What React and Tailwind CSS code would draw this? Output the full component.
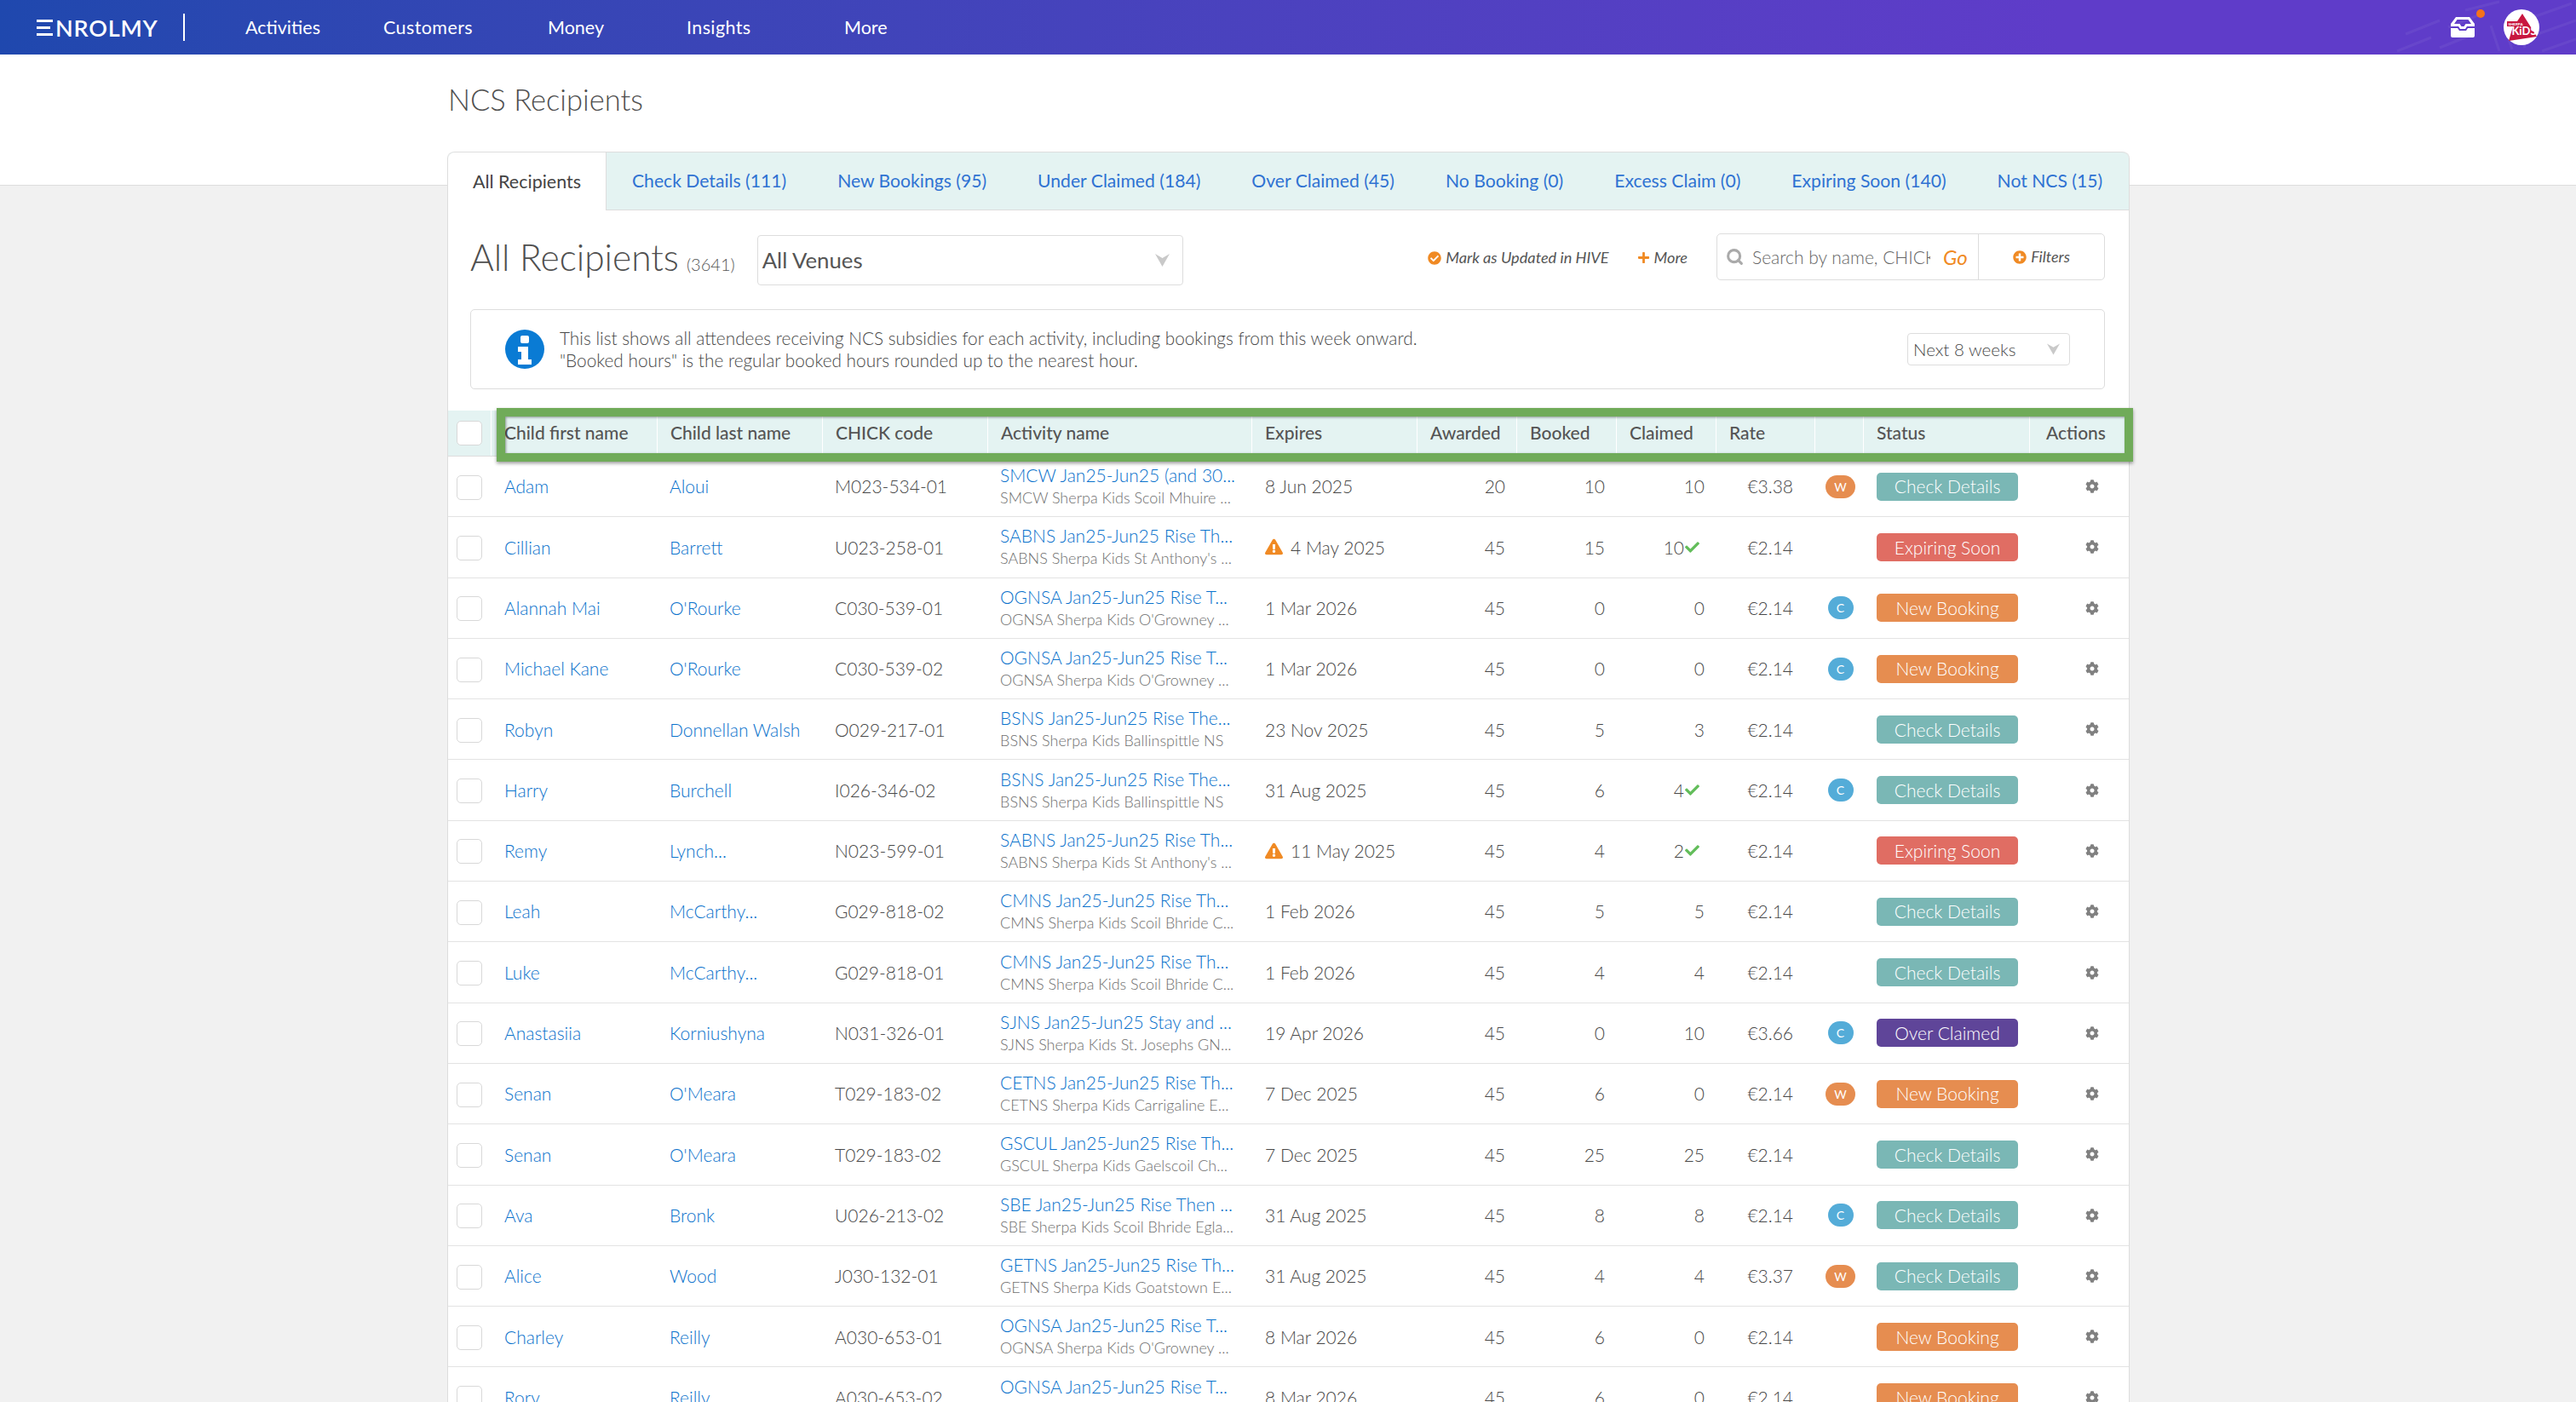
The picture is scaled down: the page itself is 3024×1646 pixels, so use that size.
import React from "react";
import { Search } from "lucide-react";
import { FaCog, FaCheck, FaExclamationTriangle, FaCheckCircle, FaPlus, FaPlusCircle } from "react-icons/fa";

const cols =
  "grid grid-cols-[51px_195px_194px_194px_310px_194px_117px_117px_117px_116px_57px_195px_116px]";

const tabs = [
  "Check Details (111)",
  "New Bookings (95)",
  "Under Claimed (184)",
  "Over Claimed (45)",
  "No Booking (0)",
  "Excess Claim (0)",
  "Expiring Soon (140)",
  "Not NCS (15)",
];

const headers = ["Child first name", "Child last name", "CHICK code", "Activity name", "Expires", "Awarded", "Booked", "Claimed", "Rate", "", "Status"];

const statusColors = {
  "Check Details": "bg-[#7ab7b5]",
  "Expiring Soon": "bg-[#e06d63]",
  "New Booking": "bg-[#e68d50]",
  "Over Claimed": "bg-[#5f4599]",
};

const rows = [
  ["Adam", "Aloui", "M023-534-01", "SMCW Jan25-Jun25 (and 30...", "SMCW Sherpa Kids Scoil Mhuire ...", "8 Jun 2025", 20, 10, "10", "€3.38", "W", "Check Details"],
  ["Cillian", "Barrett", "U023-258-01", "SABNS Jan25-Jun25 Rise Th...", "SABNS Sherpa Kids St Anthony's ...", "!4 May 2025", 45, 15, "10*", "€2.14", "", "Expiring Soon"],
  ["Alannah Mai", "O'Rourke", "C030-539-01", "OGNSA Jan25-Jun25 Rise T...", "OGNSA Sherpa Kids O'Growney ...", "1 Mar 2026", 45, 0, "0", "€2.14", "C", "New Booking"],
  ["Michael Kane", "O'Rourke", "C030-539-02", "OGNSA Jan25-Jun25 Rise T...", "OGNSA Sherpa Kids O'Growney ...", "1 Mar 2026", 45, 0, "0", "€2.14", "C", "New Booking"],
  ["Robyn", "Donnellan Walsh", "O029-217-01", "BSNS Jan25-Jun25 Rise The...", "BSNS Sherpa Kids Ballinspittle NS", "23 Nov 2025", 45, 5, "3", "€2.14", "", "Check Details"],
  ["Harry", "Burchell", "I026-346-02", "BSNS Jan25-Jun25 Rise The...", "BSNS Sherpa Kids Ballinspittle NS", "31 Aug 2025", 45, 6, "4*", "€2.14", "C", "Check Details"],
  ["Remy", "Lynch...", "N023-599-01", "SABNS Jan25-Jun25 Rise Th...", "SABNS Sherpa Kids St Anthony's ...", "!11 May 2025", 45, 4, "2*", "€2.14", "", "Expiring Soon"],
  ["Leah", "McCarthy...", "G029-818-02", "CMNS Jan25-Jun25 Rise Th...", "CMNS Sherpa Kids Scoil Bhride C...", "1 Feb 2026", 45, 5, "5", "€2.14", "", "Check Details"],
  ["Luke", "McCarthy...", "G029-818-01", "CMNS Jan25-Jun25 Rise Th...", "CMNS Sherpa Kids Scoil Bhride C...", "1 Feb 2026", 45, 4, "4", "€2.14", "", "Check Details"],
  ["Anastasiia", "Korniushyna", "N031-326-01", "SJNS Jan25-Jun25 Stay and ...", "SJNS Sherpa Kids St. Josephs GN...", "19 Apr 2026", 45, 0, "10", "€3.66", "C", "Over Claimed"],
  ["Senan", "O'Meara", "T029-183-02", "CETNS Jan25-Jun25 Rise Th...", "CETNS Sherpa Kids Carrigaline E...", "7 Dec 2025", 45, 6, "0", "€2.14", "W", "New Booking"],
  ["Senan", "O'Meara", "T029-183-02", "GSCUL Jan25-Jun25 Rise Th...", "GSCUL Sherpa Kids Gaelscoil Ch...", "7 Dec 2025", 45, 25, "25", "€2.14", "", "Check Details"],
  ["Ava", "Bronk", "U026-213-02", "SBE Jan25-Jun25 Rise Then ...", "SBE Sherpa Kids Scoil Bhride Egla...", "31 Aug 2025", 45, 8, "8", "€2.14", "C", "Check Details"],
  ["Alice", "Wood", "J030-132-01", "GETNS Jan25-Jun25 Rise Th...", "GETNS Sherpa Kids Goatstown E...", "31 Aug 2025", 45, 4, "4", "€3.37", "W", "Check Details"],
  ["Charley", "Reilly", "A030-653-01", "OGNSA Jan25-Jun25 Rise T...", "OGNSA Sherpa Kids O'Growney ...", "8 Mar 2026", 45, 6, "0", "€2.14", "", "New Booking"],
  ["Rory", "Reilly", "A030-653-02", "OGNSA Jan25-Jun25 Rise T...", "OGNSA Sherpa Kids O'Growney ...", "8 Mar 2026", 45, 6, "0", "€2.14", "", "New Booking"],
];

const InboxIcon = () => (
  <svg viewBox="0 0 28 24" className="w-[28px] h-[24px]" fill="#fff">
    <path d="M6 0h16l6 8v3H19l-2 3h-6L9 11H0V8z M7.500 3L4 8h6.500l2 3h3l2-3H24l-3.500-5z" fillRule="evenodd" />
    <path d="M0 13h8l2 3h8l2-3h8v9a2 2 0 0 1-2 2H2a2 2 0 0 1-2-2z" />
  </svg>
);

const SherpaLogo = () => (
  <div className="w-[42px] h-[42px] rounded-full bg-white flex items-center justify-center">
    <svg viewBox="0 0 42 42" className="w-[42px] h-[42px]">
      <path d="M22 5 L39 32 L6 37 L11 20 L4 20 L4 14 L16 14 Z" fill="#c8173f" />
      <rect x="4" y="14" width="20" height="6" fill="#c8173f" />
      <text x="14" y="19" fontSize="4.500" fontWeight="700" fill="#fff" textAnchor="middle" fontFamily="Lato, sans-serif">SHERPA</text>
      <text x="24" y="30" fontSize="13" fontWeight="700" fill="#fff" textAnchor="middle" fontFamily="Lato, sans-serif">KiDS</text>
    </svg>
  </div>
);

// the notched arrow used by the app's select boxes
const SelectArrow = ({ className }) => (
  <svg viewBox="0 0 17 15" className={className} fill="#c9c9c9">
    <path d="M0 0 L8.500 5 L17 0 L8.500 15 Z" />
  </svg>
);

const InfoIcon = () => (
  <svg viewBox="0 0 46 46" className="w-[46px] h-[46px] ml-[40px] shrink-0">
    <circle cx="23" cy="23" r="23" fill="#0a7bd4" />
    <rect x="18" y="7" width="10" height="9" rx="2" fill="#fff" />
    <path d="M15 20h12v15h4v6H15v-6h4v-9h-4z" fill="#fff" />
  </svg>
);

const Row = ({ row }) => {
  const [first, last, code, activity, venue, expires, awarded, booked, claimed, rate, badge, status] = row;
  const warn = expires.startsWith("!");
  const done = claimed.endsWith("*");
  return (
    <div className={`${cols} h-[71.3px] border-b border-[#e3e3e3] items-center text-[21px] text-[#484848] font-light`}>
      <div className="pl-[10px] pt-[2px]">
        <div className="w-[30px] h-[29px] rounded-[5px] border border-[#d8d8d8] bg-white" />
      </div>
      <a className="pl-[15px] text-[#0a72cc]">{first}</a>
      <a className="pl-[14px] text-[#0a72cc]">{last}</a>
      <div className="pl-[14px]">{code}</div>
      <div className="pl-[14px] leading-[27px] whitespace-nowrap">
        <a className="block text-[#0a72cc]">{activity}</a>
        <div className="text-[18px] text-[#6f6f6f]">{venue}</div>
      </div>
      <div className="pl-[15px] flex items-center whitespace-nowrap">
        {warn && <FaExclamationTriangle className="text-[#f08a24] w-[21px] h-[20px] mr-[9px]" />}
        {warn ? expires.slice(1) : expires}
      </div>
      <div className="text-right pr-[14px]">{awarded}</div>
      <div className="text-right pr-[14px]">{booked}</div>
      <div className="flex items-center justify-end pr-[14px]">
        {done ? (
          <span className="flex items-center pr-[5px]">
            {claimed.slice(0, -1)}
            <FaCheck className="text-[#62bd5a] w-[19px] h-[17px]" />
          </span>
        ) : (
          claimed
        )}
      </div>
      <div className="text-right pr-[26px]">{rate}</div>
      <div className="flex justify-center pl-[2px]">
        {badge === "W" && (
          <span className="w-[35px] h-[27px] rounded-full bg-[#e68d50] text-white text-[14px] font-normal flex items-center justify-center">W</span>
        )}
        {badge === "C" && (
          <span className="w-[30px] h-[27px] rounded-full bg-[#54acd8] text-white text-[14px] font-normal flex items-center justify-center">C</span>
        )}
      </div>
      <div className="pl-[15px]">
        <div className={`w-[166px] h-[33px] rounded-[5px] text-white flex items-center justify-center ${statusColors[status]}`}>{status}</div>
      </div>
      <div className="pl-[65px]">
        <FaCog className="w-[16px] h-[16px] text-[#808080]" />
      </div>
    </div>
  );
};

export default function App() {
  return (
    <div className="h-screen overflow-hidden bg-[#f1f1f1] font-['Lato',sans-serif] text-[#555]">
      <nav className="h-[64px] bg-gradient-to-r from-[#1f48ae] to-[#5f3cc9] to-80% flex items-center text-white relative">
        <div className="flex items-center pl-[43px] w-[215px]">
          <span className="flex flex-col gap-[5px] mr-[3px]">
            <span className="block w-[19px] h-[3px] bg-white" />
            <span className="block w-[16px] h-[3px] bg-white" />
            <span className="block w-[19px] h-[3px] bg-white" />
          </span>
          <span className="text-[27px] font-semibold tracking-[0.8px] leading-none">NROLMY</span>
        </div>
        <div className="w-[2px] h-[32px] bg-white" />
        <div className="flex text-[21.500px] ml-[71px]">
          <a className="w-[162px]">Activities</a>
          <a className="w-[193px] tracking-[0.4px]">Customers</a>
          <a className="w-[163px]">Money</a>
          <a className="w-[185px] tracking-[0.4px]">Insights</a>
          <a>More</a>
        </div>
        <svg viewBox="0 0 220 64" className="absolute right-0 top-0 w-[220px] h-[64px] opacity-[0.05]" stroke="#fff" strokeWidth="3" fill="none">
          <path d="M10 60 L50 44 M20 40 L60 24 M60 56 L100 40 M70 32 L110 16 M120 30 L130 60 M135 28 L145 58 M150 26 L160 56 M170 20 L215 4 M175 40 L220 24 M180 60 L220 46 M90 12 L130 2" />
        </svg>
        <div className="ml-auto flex items-center pr-[43px] relative">
          <div className="relative mr-[34px]">
            <InboxIcon />
            <span className="absolute -top-[9px] -right-[12px] w-[10px] h-[10px] rounded-full bg-[#f4721a]" />
          </div>
          <SherpaLogo />
        </div>
      </nav>

      <header className="h-[154px] bg-white border-b border-[#ddd] pl-[526px] pt-[28px]">
        <h1 className="text-[34.500px] font-light text-[#4f4f4f] leading-[50px]">NCS Recipients</h1>
      </header>

      <main className="w-[1975px] ml-[525px] -mt-[40px] relative bg-white border-x border-[#ddd] rounded-t-[8px]">
        <div className="flex h-[69px] bg-[#e4f3f2] border-t border-b border-[#ddd] rounded-t-[8px] text-[21.150px]">
          <div className="w-[186px] -mb-px bg-white border-r border-[#ddd] rounded-tl-[8px] flex items-center justify-center text-[#444] text-[21.500px] shrink-0">All Recipients</div>
          {tabs.map((t) => (
            <a key={t} className="px-[30px] flex items-center text-[#2f72d2] whitespace-nowrap">{t}</a>
          ))}
        </div>

        <div className="flex items-center pl-[26px] pr-[28px] h-[116px]">
          <h2 className="text-[42.500px] font-light text-[#4f4f4f] leading-none -mt-[6px]">All Recipients</h2>
          <span className="text-[20px] font-light ml-[9px] mt-[10px]">(3641)</span>
          <div className="ml-[26px] w-[500px] h-[59px] border border-[#ddd] rounded-[4px] flex items-center justify-between pl-[5px] pr-[15px] text-[25.800px]">
            All Venues
            <SelectArrow className="w-[17px] h-[15px]" />
          </div>
          <div className="ml-auto -mt-[4px] flex items-center text-[18.200px] italic text-[#555]">
            <FaCheckCircle className="w-[16px] h-[16px] text-[#f08a24] mr-[5px]" />
            Mark as Updated in HIVE
            <FaPlus className="w-[15px] h-[15px] text-[#f08a24] ml-[33px] mr-[5px]" />
            More
          </div>
          <div className="ml-[34px] -mt-[7px] w-[456px] h-[55px] border border-[#ddd] rounded-[5px] flex items-center">
            <div className="w-[307px] h-full border-r border-[#ddd] flex items-center pl-[10px]">
              <Search className="w-[21px] h-[21px] text-[#aaa] shrink-0" strokeWidth={3.5} />
              <span className="ml-[10px] w-[209px] overflow-hidden whitespace-nowrap text-[21px] font-light text-[#666]">Search by name, CHICK code</span>
              <span className="ml-[15px] text-[24px] italic text-[#f08a24]">Go</span>
            </div>
            <div className="flex-1 flex items-center justify-center italic text-[18px]">
              <FaPlusCircle className="w-[16px] h-[16px] text-[#f08a24] mr-[5px]" />
              Filters
            </div>
          </div>
        </div>

        <div className="mx-[26px] w-[1919px] h-[94px] border border-[#ddd] rounded-[5px] flex items-center">
          <InfoIcon />
          <p className="ml-[18px] text-[20.800px] font-light leading-[26px] text-[#484848]">
            This list shows all attendees receiving NCS subsidies for each activity, including bookings from this week onward.
            <br />
            "Booked hours" is the regular booked hours rounded up to the nearest hour.
          </p>
          <div className="ml-auto mr-[40px] w-[191px] h-[38px] border border-[#ddd] rounded-[4px] flex items-center justify-between pl-[6px] pr-[11px] text-[20.500px] font-light text-[#484848]">
            Next 8 weeks
            <SelectArrow className="w-[15px] h-[14px]" />
          </div>
        </div>

        <div className="relative mt-[25px]">
          <div className={`${cols} h-[54px] bg-[#e4f3f2] items-stretch text-[21px] font-medium text-[#555] border-b border-[#ddd]`}>
            <div className="pl-[10px] flex items-center border-r border-white">
              <div className="w-[30px] h-[29px] rounded-[5px] border border-[#d8d8d8] bg-white" />
            </div>
            {headers.map((h, i) => (
              <div key={i} className="pl-[15px] -mt-px flex items-center border-r border-white whitespace-nowrap">{h}</div>
            ))}
            <div className="pl-[19px] -mt-px flex items-center whitespace-nowrap">Actions</div>
          </div>
          {/* green highlight around the header cells */}
          <div className="absolute left-[57px] -top-[3px] w-[1921px] h-[63px] border-[10px] border-[#70ab59] shadow-[0_2px_4px_rgba(0,0,0,0.4),inset_1px_1px_3px_rgba(0,0,0,0.4)] pointer-events-none" />
          {rows.map((row, i) => (
            <Row key={i} row={row} />
          ))}
        </div>
      </main>
    </div>
  );
}
